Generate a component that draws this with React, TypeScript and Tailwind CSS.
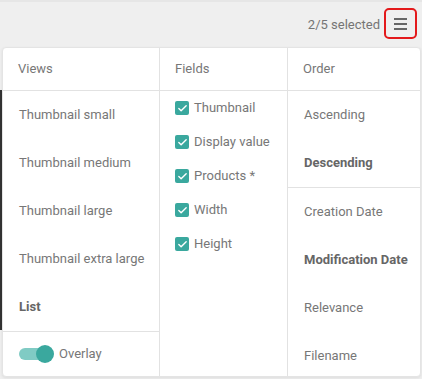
import { Check } from "lucide-react";

const views = [
  { label: "Thumbnail small" },
  { label: "Thumbnail medium" },
  { label: "Thumbnail large" },
  { label: "Thumbnail extra large" },
  { label: "List", active: true },
];

const fields = ["Thumbnail", "Display value", "Products *", "Width", "Height"];

const orderDir = [
  { label: "Ascending" },
  { label: "Descending", active: true },
];

const orderBy = [
  { label: "Creation Date" },
  { label: "Modification Date", active: true },
  { label: "Relevance" },
  { label: "Filename" },
];

function Item({ label, active }: { label: string; active?: boolean }) {
  return (
    <div
      className={
        "h-12 shrink-0 flex items-center pl-4 text-[13px] " +
        (active ? "font-bold text-[#666]" : "text-[#777]")
      }
    >
      {label}
    </div>
  );
}

function Header({ title }: { title: string }) {
  return (
    <div className="h-[43px] shrink-0 flex items-center pl-[15px] border-b border-[#e2e2e2] text-[13px] text-[#777]">
      {title}
    </div>
  );
}

export default function App() {
  return (
    <div className="relative w-[422px] h-[379px] bg-[#efefef] overflow-hidden font-['Roboto',sans-serif]">
      <div className="h-[2px] bg-[#e6e6e6]" />
      {/* content under the menu */}
      <div className="absolute left-0 top-[90px] w-[2px] h-[240px] bg-[#333]" />

      <div className="h-[45px] flex items-center justify-end pr-[5px]">
        <span className="text-[13px] text-[#757575] mr-[4px]">2/5 selected</span>
        <button className="w-[33px] h-[31px] mb-[2px] rounded-[5px] border-2 border-[#e3191b] flex flex-col items-center justify-center gap-[3px]">
          <span className="block w-[13px] h-[2px] bg-[#666]" />
          <span className="block w-[13px] h-[2px] bg-[#666]" />
          <span className="block w-[13px] h-[2px] bg-[#666]" />
        </button>
      </div>

      <div className="relative ml-[2px] w-[419px] h-[330px] bg-white rounded-[4px] border border-[#e4e4e4] shadow-[0_1px_3px_rgba(0,0,0,0.08)] flex overflow-hidden">
        <div className="w-[157px] shrink-0 flex flex-col border-r border-[#e2e2e2]">
          <Header title="Views" />
          {views.map((v) => (
            <Item key={v.label} {...v} />
          ))}
          <div className="border-t border-[#e2e2e2] h-[47px] flex items-center pl-4">
            <div className="relative w-[36px] h-[18px] flex items-center">
              <div className="w-[30px] h-[12px] rounded-full bg-[#80cbc4]" />
              <div className="absolute left-[17px] top-0 w-[18px] h-[18px] rounded-full bg-[#3aa89e]" />
            </div>
            <span className="text-[13px] text-[#777] ml-[4px]">Overlay</span>
          </div>
        </div>

        <div className="w-[128px] shrink-0 flex flex-col border-r border-[#e2e2e2]">
          <Header title="Fields" />
          {fields.map((f) => (
            <div key={f} className="h-[34px] shrink-0 flex items-center pl-[15px] text-[13px] text-[#777]">
              <span className="w-[14px] h-[14px] rounded-[2px] bg-[#3aa89e] flex items-center justify-center mr-[5px]">
                <Check size={11} strokeWidth={3} color="white" />
              </span>
              {f}
            </div>
          ))}
        </div>

        <div className="flex-1 flex flex-col">
          <Header title="Order" />
          {orderDir.map((o) => (
            <Item key={o.label} {...o} />
          ))}
          <div className="border-t border-[#e2e2e2]" />
          {orderBy.map((o) => (
            <Item key={o.label} {...o} />
          ))}
        </div>
      </div>
    </div>
  );
}
